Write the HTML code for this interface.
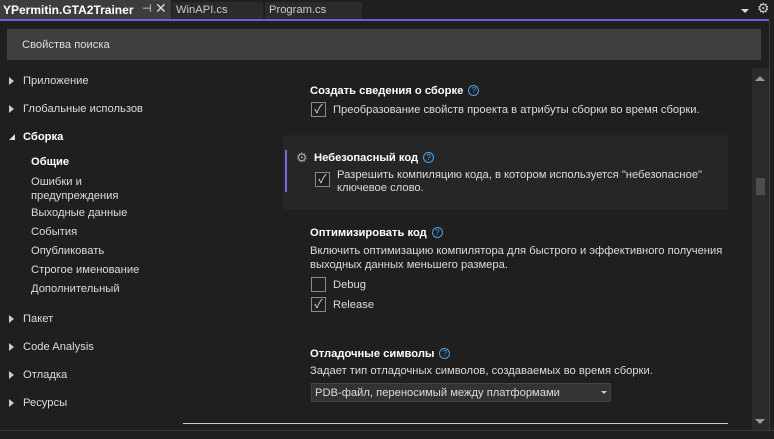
<!DOCTYPE html>
<html><head><meta charset="utf-8"><style>
*{margin:0;padding:0;box-sizing:border-box}
body{width:774px;height:439px;background:#1f1f1f;font-family:"Liberation Sans","Noto Sans CJK SC",sans-serif;font-size:11.2px;color:#dcdcdc;position:relative;overflow:hidden}
.a{position:absolute;white-space:nowrap}
.b{font-weight:bold;color:#fff}
.cb{position:absolute;width:15px;height:15px;border:1px solid #8a8a8a;background:#1f1f1f;color:#ddd;font-size:12px;line-height:13px;text-align:center}
.q{display:inline-block;width:11px;height:11px;border:1px solid #4ea1e8;border-radius:50%;color:#4ea1e8;font-size:8px;line-height:9px;text-align:center;font-weight:normal;margin-left:5px;vertical-align:1px}
.tri{position:absolute;width:0;height:0;border-top:4px solid transparent;border-bottom:4px solid transparent;border-left:5px solid #ccc}
</style></head><body>
<div class="a" style="left:0;top:0;width:171px;height:19px;background:#3d3d3d"></div>
<div class="a b" style="left:3px;top:3px;font-size:12px">YPermitin.GTA2Trainer</div>
<div class="a" style="left:142px;top:2px;color:#ddd;font-size:11px">⊣</div>
<div class="a" style="left:155px;top:0px;color:#ddd;font-size:14px">✕</div>
<div class="a" style="left:172px;top:2px;width:91px;height:17px;background:#2b2b2b"></div>
<div class="a" style="left:176px;top:4px;color:#ccc">WinAPI.cs</div>
<div class="a" style="left:265px;top:2px;width:97px;height:17px;background:#2b2b2b"></div>
<div class="a" style="left:269px;top:4px;color:#ccc">Program.cs</div>
<div class="a" style="left:741px;top:9px;border-left:4px solid transparent;border-right:4px solid transparent;border-top:4px solid #ddd"></div>
<div class="a" style="left:757px;top:0;color:#ccc;font-size:14px">⚙</div>
<div class="a" style="left:0;top:19px;width:769px;height:2px;background:#6b5cdc"></div>
<div class="a" style="left:769px;top:21px;width:1px;height:410px;background:#3a3a3a"></div>
<div class="a" style="left:7px;top:29px;width:754px;height:31px;background:#3f3f3f"></div>
<div class="a" style="left:22px;top:39px;color:#ddd">Свойства поиска</div>
<div class="tri" style="left:9px;top:77px"></div><div class="a" style="left:23px;top:75px">Приложение</div>
<div class="tri" style="left:9px;top:105px"></div><div class="a" style="left:23px;top:103px;width:120px;overflow:hidden">Глобальные использования</div>
<div class="a" style="left:9px;top:134px;border-left:6px solid transparent;border-bottom:6px solid #ddd"></div>
<div class="a b" style="left:23px;top:131px">Сборка</div>
<div class="a b" style="left:31px;top:156px">Общие</div>
<div class="a" style="left:31px;top:175px;line-height:14px">Ошибки и<br>предупреждения</div>
<div class="a" style="left:31px;top:207px">Выходные данные</div>
<div class="a" style="left:31px;top:226px">События</div>
<div class="a" style="left:31px;top:245px">Опубликовать</div>
<div class="a" style="left:31px;top:264px">Строгое именование</div>
<div class="a" style="left:31px;top:283px">Дополнительный</div>
<div class="tri" style="left:9px;top:315px"></div><div class="a" style="left:23px;top:313px">Пакет</div>
<div class="tri" style="left:9px;top:343px"></div><div class="a" style="left:23px;top:341px">Code Analysis</div>
<div class="tri" style="left:9px;top:371px"></div><div class="a" style="left:23px;top:369px">Отладка</div>
<div class="tri" style="left:9px;top:399px"></div><div class="a" style="left:23px;top:397px">Ресурсы</div>
<div class="a b" style="left:310px;top:85px">Создать сведения о сборке<span class="q">?</span></div>
<div class="cb" style="left:311px;top:102px">✓</div>
<div class="a" style="left:333px;top:104px">Преобразование свойств проекта в атрибуты сборки во время сборки.</div>
<div class="a" style="left:283px;top:135px;width:445px;height:75px;background:#262626"></div>
<div class="a" style="left:285px;top:150px;width:2px;height:42px;background:#7b6be0"></div>
<div class="a" style="left:296px;top:150px;color:#aaa;font-size:13px">⚙</div>
<div class="a b" style="left:314px;top:152px">Небезопасный код<span class="q">?</span></div>
<div class="cb" style="left:315px;top:172px">✓</div>
<div class="a" style="left:337px;top:169px;line-height:13px">Разрешить компиляцию кода, в котором используется "небезопасное"<br>ключевое слово.</div>
<div class="a b" style="left:310px;top:227px">Оптимизировать код<span class="q">?</span></div>
<div class="a" style="left:310px;top:244px;line-height:14px">Включить оптимизацию компилятора для быстрого и эффективного получения<br>выходных данных меньшего размера.</div>
<div class="cb" style="left:311px;top:277px"></div>
<div class="a" style="left:333px;top:279px">Debug</div>
<div class="cb" style="left:311px;top:297px">✓</div>
<div class="a" style="left:333px;top:299px">Release</div>
<div class="a b" style="left:310px;top:348px">Отладочные символы<span class="q">?</span></div>
<div class="a" style="left:310px;top:365px">Задает тип отладочных символов, создаваемых во время сборки.</div>
<div class="a" style="left:311px;top:383px;width:300px;height:19px;background:#333;border:1px solid #444"></div>
<div class="a" style="left:315px;top:387px">PDB-файл, переносимый между платформами</div>
<div class="a" style="left:601px;top:391px;border-left:3px solid transparent;border-right:3px solid transparent;border-top:3px solid #ccc"></div>
<div class="a" style="left:183px;top:423px;width:545px;height:1px;background:#ccc"></div>
<div class="a" style="left:752px;top:68px;width:17px;height:362px;background:#2b2b2b"></div>
<div class="a" style="left:755px;top:76px;border-left:5px solid transparent;border-right:5px solid transparent;border-bottom:5px solid #999"></div>
<div class="a" style="left:756px;top:178px;width:9px;height:17px;background:#4d4d4d"></div>
<div class="a" style="left:755px;top:419px;border-left:5px solid transparent;border-right:5px solid transparent;border-top:5px solid #999"></div>
<div class="a" style="left:0;top:430px;width:774px;height:1px;background:#3a3a3a"></div>
</body></html>
